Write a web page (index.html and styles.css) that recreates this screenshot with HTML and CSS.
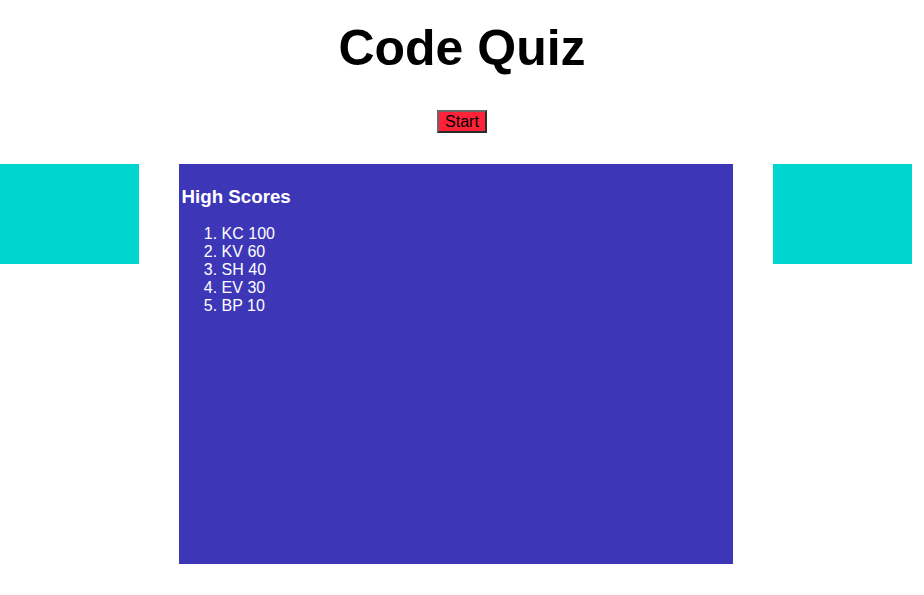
FILE: index.html
```html
<!DOCTYPE html>
<html lang="en">
<head>
<meta charset="utf-8">
<title>Code Quiz</title>
<link rel="stylesheet" href="styles.css">
</head>
<body>
<header class="header">
  <h1 class="title">Code Quiz</h1>
  <button class="start-btn" type="button">Start</button>
</header>
<main class="layout">
  <aside class="side"></aside>
  <section class="panel">
    <h3 class="panel-title">High Scores</h3>
    <ol class="scores">
      <li>KC 100</li>
      <li>KV 60</li>
      <li>SH 40</li>
      <li>EV 30</li>
      <li>BP 10</li>
    </ol>
  </section>
  <aside class="side"></aside>
</main>
</body>
</html>
```
FILE: styles.css
```css
html, body {
  margin: 0;
  padding: 0;
  background: #ffffff;
  font-family: "Liberation Sans", Arial, Helvetica, sans-serif;
  color: #000;
}

.header {
  display: flex;
  flex-direction: column;
  align-items: center;
}

.title {
  font-size: 50px;
  font-weight: bold;
  margin: 20px 0 0 0;
  line-height: 56px;
}

.start-btn {
  margin-top: 34px;
  width: 50px;
  height: 23px;
  padding: 0;
  font-family: "Liberation Sans", Arial, sans-serif;
  font-size: 16px;
  color: #000;
  background: #ff2339;
  border: 2px solid;
  border-color: #6a6a6a #2a2a2a #2a2a2a #6a6a6a;
  box-sizing: border-box;
}

.layout {
  display: flex;
  gap: 40px;
  margin-top: 31px;
  align-items: flex-start;
}

.side {
  width: 15%;
  height: 100px;
  background: #00d6d0;
  flex: none;
}

.panel {
  width: 60%;
  height: 400px;
  flex: none;
  background: #3d37b8;
  color: #ffffff;
  padding: 1px 3px 0 3px;
  box-sizing: border-box;
  display: flex;
  flex-direction: column;
}

.panel-title {
  font-size: 18.72px;
  font-weight: bold;
  margin: 20.7px 0 0 0;
}

.scores {
  margin: 17.7px 0 0 0;
  padding-left: 40px;
  font-size: 16px;
}
```
